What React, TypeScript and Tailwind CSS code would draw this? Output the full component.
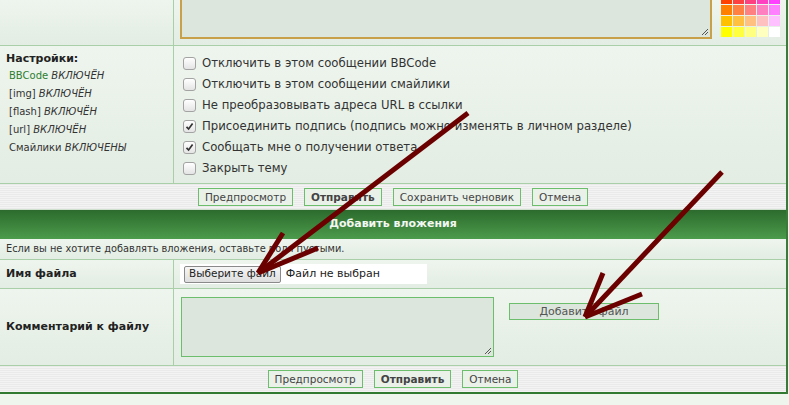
import React from 'react';

const palette = [
  ['#ff4000', '#ff4040', '#ff4080', '#ff40c0', '#ff40ff'],
  ['#ff8000', '#ff8040', '#ff8080', '#ff80c0', '#ff80ff'],
  ['#ffc000', '#ffc040', '#ffc080', '#ffc0c0', '#ffc0ff'],
  ['#ffff00', '#ffff40', '#ffff80', '#ffffc0', '#ffffff'],
];

const options = [
  { label: 'Отключить в этом сообщении BBCode', checked: false },
  { label: 'Отключить в этом сообщении смайлики', checked: false },
  { label: 'Не преобразовывать адреса URL в ссылки', checked: false },
  { label: 'Присоединить подпись (подпись можно изменять в личном разделе)', checked: true },
  { label: 'Сообщать мне о получении ответа', checked: true },
  { label: 'Закрыть тему', checked: false },
];

const ResizeGrip: React.FC = () => (
  <svg className="absolute bottom-[1px] right-[1px]" width="9" height="9" viewBox="0 0 9 9">
    <path d="M8 2L2 8M8 5L5 8" stroke="#555" strokeWidth="1" />
  </svg>
);

const Checkbox: React.FC<{ checked: boolean }> = ({ checked }) => (
  <span className="flex h-[13px] w-[13px] shrink-0 items-center justify-center rounded-[3px] border border-[#a3a3a3] bg-gradient-to-b from-[#ffffff] to-[#e4e4e4]">
    {checked && (
      <svg width="9" height="9" viewBox="0 0 9 9">
        <path d="M1.5 4.8L3.6 7L7.6 1.6" fill="none" stroke="#333" strokeWidth="1.7" />
      </svg>
    )}
  </span>
);

const Btn: React.FC<{ children: React.ReactNode; bold?: boolean }> = ({ children, bold }) => (
  <button
    className={`h-[18px] border border-[#6cbd6c] bg-[#e9f1e9] px-[6px] text-[10.5px] leading-[16px] text-[#444] ${bold ? 'font-bold' : ''}`}
  >
    {children}
  </button>
);

const ButtonBar: React.FC<{ draft?: boolean; last?: boolean }> = ({ draft, last }) => (
  <div
    className={`flex items-center justify-center gap-[11px] bg-[repeating-linear-gradient(to_bottom,#eaeaea_0px,#eaeaea_1px,#f3f3f3_1px,#f3f3f3_2px)] ${
      last ? 'h-[28px] border-b-2 border-[#2f7a30]' : 'h-[25px]'
    }`}
  >
    <Btn>Предпросмотр</Btn>
    <Btn bold>Отправить</Btn>
    {draft && <Btn>Сохранить черновик</Btn>}
    <Btn>Отмена</Btn>
  </div>
);

const rowBg = 'bg-gradient-to-b from-[#eef5ee] to-[#e3ede3]';
const line = 'border-[#a9cfa9]';

export default function App() {
  return (
    <div className="relative h-[405px] w-[789px] overflow-hidden bg-[#edf5ed] font-['DejaVu_Sans',sans-serif] text-[#333]">
      <div className="w-[788px] border-r-2 border-[#3a7a3a]">
        {/* message row (cut off at the top) */}
        <div className={`flex h-[46px] border-b ${line} ${rowBg}`}>
          <div className={`w-[174px] shrink-0 border-r ${line}`} />
          <div className="flex flex-1 items-start gap-[9px] pl-[6px]">
            <div className="relative h-[39px] w-[532px] border-x-2 border-b-2 border-[#c8a04a] bg-[#dce6dc]">
              <ResizeGrip />
            </div>
            <div className="-mt-[6px] grid grid-cols-[repeat(5,11px)] auto-rows-[10px] gap-x-px gap-y-px">
              {palette.flat().map((c, i) => (
                <span key={i} style={{ backgroundColor: c }} />
              ))}
            </div>
          </div>
        </div>

        {/* settings */}
        <div className={`flex h-[138px] border-b ${line} ${rowBg}`}>
          <div className={`w-[174px] shrink-0 border-r ${line} pl-[6px] pt-[5px]`}>
            <div className="text-[11px] font-bold leading-[16px] text-[#222]">Настройки:</div>
            <div className="pl-[3px] text-[10px] leading-[18px]">
              <div>
                <span className="text-[#2e7d32]">BBCode</span> <i>ВКЛЮЧЁН</i>
              </div>
              <div>
                [img] <i>ВКЛЮЧЁН</i>
              </div>
              <div>
                [flash] <i>ВКЛЮЧЁН</i>
              </div>
              <div>
                [url] <i>ВКЛЮЧЁН</i>
              </div>
              <div>
                Смайлики <i>ВКЛЮЧЕНЫ</i>
              </div>
            </div>
          </div>
          <div className="flex flex-1 flex-col pl-[9px] pt-[7px]">
            {options.map((o) => (
              <label key={o.label} className="flex h-[21px] items-center gap-[6px] text-[11.7px]">
                <Checkbox checked={o.checked} />
                <span>{o.label}</span>
              </label>
            ))}
          </div>
        </div>

        <ButtonBar draft />

        {/* attachments header */}
        <div className="flex h-[30px] items-center justify-center border-t border-[#cfe0cf] bg-gradient-to-b from-[#2c6b2d] to-[#4c9b4c] text-[11px] font-bold text-[#f2f7f2]">
          Добавить вложения
        </div>

        <div className={`flex h-[21px] items-center border-b ${line} ${rowBg} pl-[6px] text-[9.8px]`}>
          Если вы не хотите добавлять вложения, оставьте поля пустыми.
        </div>

        <div className={`flex h-[29px] border-b ${line} ${rowBg}`}>
          <div className={`flex w-[174px] shrink-0 items-center border-r ${line} pl-[6px] text-[11px] font-bold text-[#222]`}>
            Имя файла
          </div>
          <div className="flex flex-1 items-center pl-[6px]">
            <div className="flex h-[20px] w-[247px] items-center gap-[5px] bg-white pl-[4px]">
              <span className="flex h-[17px] items-center rounded-[2px] border border-[#8a8a8a] bg-gradient-to-b from-[#f6f6f6] to-[#dedede] px-[4px] text-[10.5px] text-[#222]">
                Выберите файл
              </span>
              <span className="text-[11px] text-[#222]">Файл не выбран</span>
            </div>
          </div>
        </div>

        <div className={`flex h-[77px] border-b ${line} ${rowBg}`}>
          <div className={`flex w-[174px] shrink-0 items-center border-r ${line} pl-[6px] text-[11px] font-bold text-[#222]`}>
            Комментарий к файлу
          </div>
          <div className="flex flex-1 items-start gap-[15px] pl-[7px] pt-[8px]">
            <div className="relative h-[60px] w-[313px] border border-[#6cbd6c] bg-[#dce6dc]">
              <ResizeGrip />
            </div>
            <button className="mt-[6px] h-[17px] w-[150px] border border-[#6cbd6c] bg-[#dce6dc] text-[11px] leading-[15px] text-[#555]">
              Добавить файл
            </button>
          </div>
        </div>

        <ButtonBar last />
      </div>

      {/* annotation arrows */}
      <svg className="pointer-events-none absolute left-0 top-0" width="789" height="405" viewBox="0 0 789 405">
        <g stroke="#6b0000" strokeWidth="5" strokeLinecap="butt" fill="none">
          <line x1="468" y1="113" x2="258" y2="273" />
          <line x1="283" y1="233" x2="258" y2="273" />
          <line x1="318" y1="248" x2="258" y2="273" />
          <line x1="722" y1="172" x2="585" y2="317" />
          <line x1="603" y1="273" x2="585" y2="317" />
          <line x1="642" y1="294" x2="585" y2="317" />
        </g>
      </svg>
    </div>
  );
}
